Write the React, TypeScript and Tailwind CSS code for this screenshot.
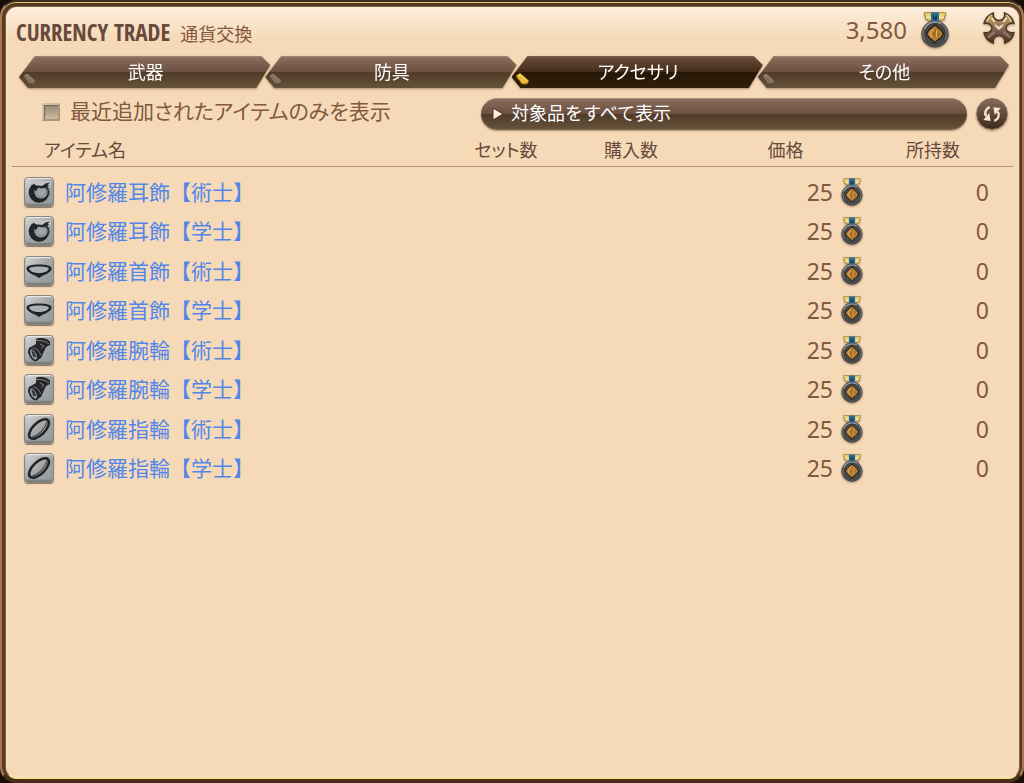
import { useState } from "react";

type Kind = "earring" | "necklace" | "bracelet" | "ring";

const tabs = ["武器", "防具", "アクセサリ", "その他"];

const items: { kind: Kind; name: string; price: number; owned: number }[] = [
  { kind: "earring", name: "阿修羅耳飾【術士】", price: 25, owned: 0 },
  { kind: "earring", name: "阿修羅耳飾【学士】", price: 25, owned: 0 },
  { kind: "necklace", name: "阿修羅首飾【術士】", price: 25, owned: 0 },
  { kind: "necklace", name: "阿修羅首飾【学士】", price: 25, owned: 0 },
  { kind: "bracelet", name: "阿修羅腕輪【術士】", price: 25, owned: 0 },
  { kind: "bracelet", name: "阿修羅腕輪【学士】", price: 25, owned: 0 },
  { kind: "ring", name: "阿修羅指輪【術士】", price: 25, owned: 0 },
  { kind: "ring", name: "阿修羅指輪【学士】", price: 25, owned: 0 },
];

function Medal({ className }: { className: string }) {
  return (
    <svg viewBox="0 0 28 36" className={`shrink-0 drop-shadow-[0_1px_1px_#a08568] ${className}`} aria-hidden="true">
      <circle cx="14" cy="22" r="13.600" fill="#3a3b3c" />
      <circle cx="14" cy="21.800" r="11.800" fill="none" stroke="#66696b" strokeWidth="2.200" />
      <path d="M3.500 17A11.800 11.800 0 0 1 20 11.500" fill="none" stroke="#9da0a1" strokeWidth="1.500" />
      <path d="M4 28A12 12 0 0 0 24 28" fill="none" stroke="#494c4e" strokeWidth="2" />
      <circle cx="14" cy="21.800" r="9.500" fill="#4b4c4c" />
      <path d="M3.500 .6H24.500V3L23.500 4V7L20 8.500H8L4.500 7V4L3.500 3Z" fill="#e9cf72" stroke="#94783a" strokeWidth=".8" />
      <path d="M5 5H10M18 5H23" stroke="#f7e79f" strokeWidth="1.500" />
      <path d="M10 .6H18V8L16 9.500H12L10 8Z" fill="#2a6a96" />
      <path d="M12 3L14 5L16 3V8H12Z" fill="#174563" />
      <path d="M14 13L17 15.500L20 18L22.500 21.800L20 25.500L17 28L14 30.500L11 28L8 25.500L5.500 21.800L8 18L11 15.500Z" fill="#b57d33" stroke="#211c12" strokeWidth="1.200" />
      <path d="M12.500 16.500L9 21.500L11.500 25.500" fill="none" stroke="#d59f4e" strokeWidth="1.800" />
      <path d="M15 17V21L18 23M13 20V25" fill="none" stroke="#8a5c1e" strokeWidth="1.200" />
      <path d="M15.500 18V25" stroke="#e3b565" strokeWidth="1" />
    </svg>
  );
}

function ItemIcon({ kind }: { kind: Kind }) {
  return (
    <span className="block size-[30px] shrink-0 rounded-[4px] border border-[#8c857c] bg-linear-to-br from-[#d5d6d7] via-[#a3a5a7] to-[#969a9c] shadow-[inset_0_1px_1px_#eeeeee,inset_0_-2px_2px_#77797b,0_1px_1px_#8a745f]">
      <svg viewBox="0 0 28 28" className="size-full" aria-hidden="true">
        {kind === "earring" && (
          <g>
            <circle cx="14" cy="14.500" r="10.300" fill="#222426" />
            <path d="M9 3H26V9L20 8L13 8.500L9 6Z" fill="#bfc1c2" />
            <circle cx="16" cy="13.700" r="6.800" fill="#a0a4a7" />
            <circle cx="16" cy="13.700" r="5.300" fill="none" stroke="#7c8083" strokeWidth="1" />
            <path d="M6 8L8.500 6.500L10.500 8L13 7.500L17 8.300L20.500 5.500L25 4.500L22.500 7L24.500 7.500L20.500 9.500L17 10.500L13.500 9.500L10.500 13.500L9.500 10.500Z" fill="#202224" />
            <path d="M20 9C23 10 24 13 23.500 17" fill="none" stroke="#303234" strokeWidth="1.500" />
          </g>
        )}
        {kind === "necklace" && (
          <g>
            <path d="M4 12C6 15 10 16 14 16S22 15 24 12C23 10 19 9.500 14 9.500S5 10 4 12Z" fill="#acb0b2" />
            <path fillRule="evenodd" d="M1.500 11.500C1.500 8.500 7 7.500 14 7.500S26.500 8.500 26.500 11.500C26.500 14.500 22 17 18 18.500L14 21L10 18.500C6 17 1.500 14.500 1.500 11.500ZM4 11.500C5 14.500 9 16 14 16S23 14.500 24 11.500C23 10 19 9.500 14 9.500S5 10 4 11.500Z" fill="#202224" />
          </g>
        )}
        {kind === "bracelet" && (
          <g>
            <path d="M11 3C14 1 23 2 25 6V9L21 11L16 22L11 25L3 17L4 12L11 8Z" fill="#242628" />
            <ellipse cx="8.500" cy="18.500" rx="3.500" ry="6.500" transform="rotate(-28 8.500 18.500)" fill="#96999c" stroke="#242628" strokeWidth="1.700" />
            <path d="M7 14.500L9 21M8.500 15.500L10.500 21" fill="none" stroke="#333638" strokeWidth="1.300" />
            <path d="M11 4.500C15 4 21 5 24 8M8 12C12 12 15 16 15.500 19M15 8L19 10L16 12.500" fill="none" stroke="#96999c" strokeWidth=".8" />
          </g>
        )}
        {kind === "ring" && (
          <g fill="none">
            <ellipse cx="14" cy="14" rx="12.500" ry="6" transform="rotate(-44 14 14)" stroke="#222426" strokeWidth="2.600" />
            <path d="M7 22C13 21 20 14 22 7" stroke="#4b4e50" strokeWidth="1.200" />
          </g>
        )}
      </svg>
    </span>
  );
}

function CloseIcon() {
  return (
    <svg viewBox="0 0 32 32" className="size-8 drop-shadow-[0_1px_1px_#b08d6f]" aria-hidden="true">
      <defs>
        <linearGradient id="bronze" x1="0" y1="0" x2="0" y2="1">
          <stop offset="0" stopColor="#6d5530" />
          <stop offset=".2" stopColor="#b09564" />
          <stop offset=".42" stopColor="#94755e" />
          <stop offset=".7" stopColor="#6c5042" />
          <stop offset="1" stopColor="#443325" />
        </linearGradient>
      </defs>
      <path
        d="M10.500 .8C9.500 5 12 8.500 16 8.500S22.500 5 21.500 .8C26 2.500 29.800 6.500 31 11.500C27 10.500 23 12.500 23 16S27 21.500 31 20.500C30 25.500 26 29.500 21.500 31.200C22.500 27 20 23.500 16 23.500S9.500 27 10.500 31.200C6 29.500 2 25.500 1 20.500C5 21.500 9 19.500 9 16S5 10.500 1 11.500C2.200 6.500 6 2.500 10.500 .8Z"
        fill="url(#bronze)"
        stroke="#4c3725"
        strokeWidth="1.400"
        strokeLinejoin="round"
      />
      <path d="M4 9.500C5 6 7 4 9 3M28 9.500C27 6 25 4 23 3" fill="none" stroke="#dcc37c" strokeWidth="1.600" />
      <path d="M8.500 5.500L11.500 10M23.500 5.500L20.500 10" stroke="#f0dfa0" strokeWidth="2" />
      <path d="M11 11.500L16 14.500L21 11.500L19 15.500L16 18L13 15.500Z" fill="#eed6ba" />
      <path d="M5 25.500L11.500 20M27 25.500L20.500 20" stroke="#9b7d68" strokeWidth="1.800" />
    </svg>
  );
}

function RefreshIcon() {
  return (
    <svg viewBox="0 0 24 24" className="size-[22px]" aria-hidden="true">
      <path d="M9.500 4.500C5 6 3.500 10.500 5.500 14.500M14.500 19.500C19 18 20.500 13.500 18.500 9.500" fill="none" stroke="#fbe7cd" strokeWidth="2.600" />
      <path d="M2.500 18.500L10.500 19.500L9 11Z" fill="#fbe7cd" />
      <path d="M21.500 5.500L13.500 4.500L15 13Z" fill="#fbe7cd" />
    </svg>
  );
}

export default function App() {
  const [active, setActive] = useState(2);
  return (
    <div className="flex min-h-screen bg-[#160e09] font-['Noto_Sans','Noto_Sans_CJK_JP',sans-serif] text-[#83583f]">
      <div className="flex flex-1 rounded-[16px] border-x-2 border-t-2 border-b-4 border-x-[#aa7650] border-t-[#403020] border-b-[#4c2c18] bg-[#573a22] shadow-[inset_0_1px_0_#dec27d]">
        <main className="mr-0.5 ml-[3px] mt-1 flex-1 rounded-[12px] border border-x-[#806044] border-t-[#806044] border-b-[#f3df80] bg-[#f6dab8] bg-linear-to-b from-[#fdeedd] from-0% via-[#f6dab8] via-[32px] to-[#f6dab8] to-100% px-[6px] shadow-[inset_0_0_2px_#fff0cf]">
          <header className="flex h-[49px] items-center pb-1">
            <h1 className="flex flex-1 items-baseline pt-1 pl-1">
              <span className="font-['Open_Sans_Condensed','Roboto_Condensed','Liberation_Sans_Narrow',sans-serif] text-[23px] leading-10 font-medium text-[#674a3c]">
                CURRENCY TRADE
              </span>
              <span className="ml-2.5 text-[18px] leading-6">通貨交換</span>
            </h1>
            <div className="mr-[34px] flex items-center gap-3.5">
              <span className="text-[24px] leading-8">3,580</span>
              <Medal className="h-9 w-7" />
            </div>
            <button type="button" aria-label="閉じる" className="-mr-0.5 mb-1">
              <CloseIcon />
            </button>
          </header>

          <div role="tablist" className="flex pr-1 pl-[7px]">
            {tabs.map((tab, i) => (
              <div key={tab} className="-ml-[5px] flex flex-1 drop-shadow-[0_1px_1px_#a98869] first:ml-0">
                <button
                  type="button"
                  role="tab"
                  aria-selected={active === i}
                  onClick={() => setActive(i)}
                  className={`relative h-8 flex-1 pl-0.5 text-[18px] leading-8 text-white [clip-path:polygon(0_66%,16px_0,calc(100%_-_9px)_0,100%_28%,calc(100%_-_14px)_100%,9px_100%)] [font-feature-settings:'palt'] ${
                    active === i
                      ? "bg-[linear-gradient(#816451_0,#674a38_2px,#442d1b_49%,#281604_50%,#302009_100%)]"
                      : "bg-[linear-gradient(#a48979_0,#896b5b_2px,#6c5041_49%,#513a29_50%,#655239_100%)]"
                  }`}
                >
                  <svg viewBox="0 0 18 16" className="absolute bottom-0.5 left-0.5 h-4 w-[18px]" aria-hidden="true">
                    <path
                      d="M2 6L6 3L15 11L13 14H8Z"
                      className={active === i ? "fill-[#eebd36] stroke-[#8c641b]" : "fill-[#86705f] stroke-[#554233]"}
                    />
                    <path d="M4 5.500L7 5L13 10.500" fill="none" className={active === i ? "stroke-[#ffe385]" : "stroke-[#9c8777]"} />
                  </svg>
                  {tab}
                </button>
              </div>
            ))}
          </div>

          <div className="mt-2.5 flex h-8 items-center pr-[5px]">
            <label className="flex flex-1 items-center gap-2.5 pb-1 pl-[30px] text-[21px] leading-7 [font-feature-settings:'palt']">
              <input
                type="checkbox"
                className="size-[18px] appearance-none border-2 border-[#d0c2a8] border-r-[#a8967d] border-b-[#a8967d] bg-linear-to-b from-[#958674] to-[#d0bba0] shadow-[inset_1px_1px_1px_#6d6152] checked:bg-[#6b4a36]"
              />
              <span className="pb-0.5">最近追加されたアイテムのみを表示</span>
            </label>
            <div className="relative flex w-[486px] max-w-1/2">
              <select
                aria-label="表示対象"
                className="h-8 flex-1 appearance-none rounded-full border-t border-b border-t-[#ab9282] border-b-[#786650] bg-[linear-gradient(#896b5b_0,#6c5041_49%,#513a29_50%,#655239_100%)] pb-0.5 pl-[30px] text-[18px] text-white shadow-[0_1px_2px_#a98869]"
              >
                <option>対象品をすべて表示</option>
              </select>
              <svg viewBox="0 0 12 14" className="pointer-events-none absolute top-[9px] left-[11px] h-3.5 w-3" aria-hidden="true">
                <path d="M1 1L11 7L1 13Z" fill="#ffeed7" stroke="#4b3425" />
              </svg>
            </div>
            <button
              type="button"
              aria-label="更新"
              className="ml-[9px] flex size-8 items-center justify-center rounded-full border border-[#8c715f] bg-linear-to-b from-[#896b5b] to-[#3b2a1a] shadow-[0_1px_2px_#a98869]"
            >
              <RefreshIcon />
            </button>
          </div>

          <table className="mt-1 w-full table-fixed border-collapse">
            <colgroup>
              <col />
              <col className="w-[128px]" />
              <col className="w-[122px]" />
              <col className="w-[187px]" />
              <col className="w-[134px]" />
            </colgroup>
            <thead className="border-b border-[#b29379] text-[18px] leading-8 text-[#674a3c] [font-feature-settings:'palt']">
              <tr>
                <th className="p-0 pl-8 text-left font-normal">アイテム名</th>
                <th className="p-0 font-normal">セット数</th>
                <th className="p-0 font-normal">購入数</th>
                <th className="p-0 font-normal">価格</th>
                <th className="p-0 pr-[26px] font-normal">所持数</th>
              </tr>
            </thead>
            <tbody className="before:block before:h-[5px]">
              {items.map((item) => (
                <tr key={item.name} className="odd:h-[39px] even:h-10">
                  <td className="p-0 pl-3">
                    <a href="#" className="flex items-center gap-[11px] text-[21px] leading-8 text-[#5286e8]">
                      <ItemIcon kind={item.kind} />
                      {item.name}
                    </a>
                  </td>
                  <td />
                  <td />
                  <td className="p-0 pr-4">
                    <span className="flex items-center justify-end gap-2 text-[23px] leading-8">
                      {item.price}
                      <Medal className="h-7 w-[22px]" />
                    </span>
                  </td>
                  <td className="p-0 pr-6 text-right text-[23px] leading-8">{item.owned}</td>
                </tr>
              ))}
            </tbody>
          </table>
        </main>
      </div>
    </div>
  );
}
